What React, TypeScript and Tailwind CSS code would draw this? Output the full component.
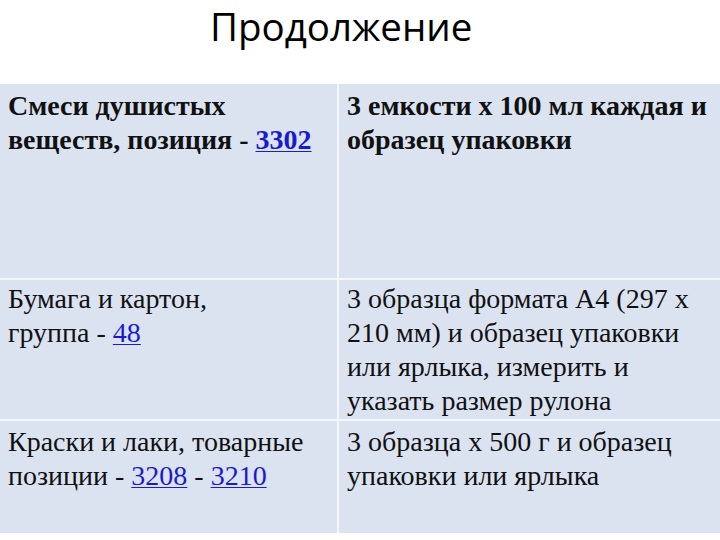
import React from "react";

function Link({ children }: { children: React.ReactNode }) {
  return <span className="text-[#1a1ad0] underline decoration-1 underline-offset-2">{children}</span>;
}

export default function App() {
  return (
    <div className="w-[720px] h-[540px] bg-white overflow-hidden flex flex-col">
      <div className="h-[84px] flex">
        <div className="ml-[210px] mt-[2px] text-[38.5px] leading-[48px] text-black font-['Open_Sans',sans-serif] font-normal">
          Продолжение
        </div>
      </div>
      <div className="grid grid-cols-[337px_1fr] gap-x-[2px] gap-y-[2px] bg-[#f4f6fa] text-[28px] leading-[34px] text-[#111] font-['Liberation_Serif','Tinos','DejaVu_Serif',serif]">
        <div className="h-[194px] bg-[#dbe3f1] pl-[8px] pt-[5px] font-bold">
          Смеси душистых веществ, позиция - <Link>3302</Link>
        </div>
        <div className="h-[194px] bg-[#dbe3f1] pl-[8px] pt-[5px] font-bold">
          3 емкости х 100 мл каждая и образец упаковки
        </div>
        <div className="h-[139px] bg-[#dbe3f1] pl-[8px] pt-[2px]">
          Бумага и картон,
          <br />
          группа - <Link>48</Link>
        </div>
        <div className="h-[139px] bg-[#dbe3f1] pl-[8px] pt-[2px]">
          3 образца формата А4 (297 х 210 мм) и образец упаковки или ярлыка, измерить и указать размер рулона
        </div>
        <div className="h-[112px] bg-[#dbe3f1] pl-[8px] pt-[4px]">
          Краски и лаки, товарные позиции - <Link>3208</Link> - <Link>3210</Link>
        </div>
        <div className="h-[112px] bg-[#dbe3f1] pl-[8px] pt-[4px]">
          3 образца х 500 г и образец упаковки или ярлыка
        </div>
      </div>
    </div>
  );
}
